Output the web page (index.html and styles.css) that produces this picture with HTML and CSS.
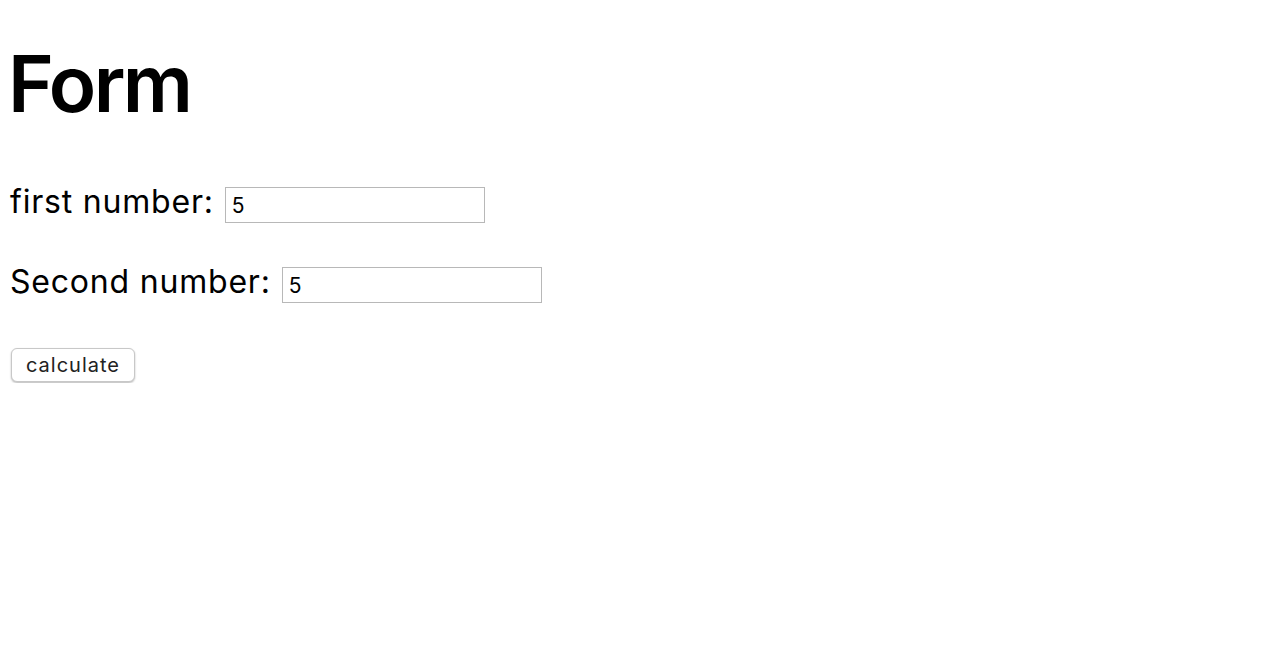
FILE: index.html
```html
<!DOCTYPE html>
<html>
<head>
<meta charset="utf-8">
<link rel="stylesheet" href="styles.css">
</head>
<body>
<h1 class="title">Form</h1>
<form class="form">
  <div class="row"><label class="label" for="a">first number:</label> <input class="num" id="a" type="text" value="5"></div>
  <div class="row"><label class="label" for="b">Second number:</label> <input class="num" id="b" type="text" value="5"></div>
  <div class="row"><button class="btn" type="button">calculate</button></div>
</form>
</body>
</html>
```

FILE: styles.css
```css
body {
  margin: 8px;
  font-family: Inter, "Noto Sans CJK JP", sans-serif;
  color: #000;
  background: #fff;
}
.title {
  font-size: 78px;
  font-weight: 600;
  letter-spacing: -2.6px;
  margin: 37px 0 64px 0;
  line-height: 78px;
  height: 78px;
}
.form {
  display: flex;
  flex-direction: column;
  gap: 44px;
}
.row {
  display: flex;
  align-items: baseline;
  gap: 11px;
  height: 36px;
}
.label {
  font-size: 32px;
  line-height: 28px;
  letter-spacing: 0.8px;
  padding-left: 2px;
}
.num {
  width: 260px;
  height: 36px;
  box-sizing: border-box;
  border: 1px solid #b8b8b8;
  font-family: Inter, sans-serif;
  font-size: 21px;
  padding: 0 6px;
  margin: 0;
  color: #000;
}
.btn {
  align-self: center;
  margin-left: 3px;
  width: 124px;
  height: 34px;
  padding: 0;
  background: #fff;
  border: 1px solid #c8c8c8;
  border-radius: 6px;
  box-shadow: 0 1px 2px rgba(0,0,0,0.28);
  font-family: Inter, sans-serif;
  font-size: 20px;
  letter-spacing: 1px;
  color: #222;
}
```
